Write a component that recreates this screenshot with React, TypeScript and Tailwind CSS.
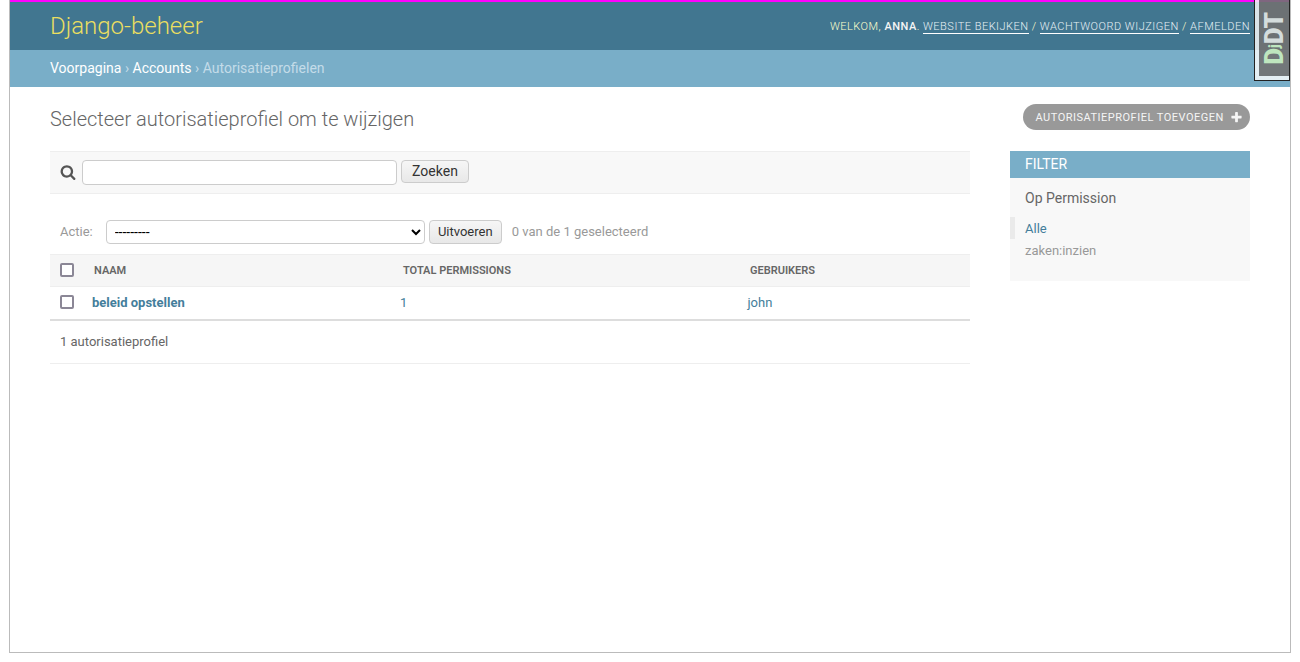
const userLinks = ["Website bekijken", "Wachtwoord wijzigen", "Afmelden"];

function Header() {
  return (
    <div className="flex h-[48px] items-center justify-between bg-[#417690] px-10">
      <div className="text-[24px] font-light text-[#ebdf60]">Django-beheer</div>
      <div className="pt-[2px] text-[11px] font-light tracking-[0.5px] uppercase text-[#ffffcc]">
        <span>Welkom, </span>
        <strong className="font-medium text-[#f5f5f5]">Anna</strong>
        <span>. </span>
        {userLinks.map((link, i) => (
          <span key={link}>
            {i > 0 && " / "}
            <a className="border-b border-white text-[#e6f0f5]">{link}</a>
          </span>
        ))}
      </div>
    </div>
  );
}

function Breadcrumbs() {
  return (
    <div className="flex h-[37px] items-center bg-[#79aec8] px-10 text-[14px] text-[#c4dce8]">
      <a className="text-white">Voorpagina</a>
      <span className="whitespace-pre"> › </span>
      <a className="text-white">Accounts</a>
      <span className="whitespace-pre"> › Autorisatieprofielen</span>
    </div>
  );
}

function Toolbar() {
  return (
    <div className="flex h-[43px] items-center border-y border-[#eeeeee] bg-[#f8f8f8] px-[10px]">
      <svg viewBox="0 0 1792 1792" className="mb-[1px] size-[16px] shrink-0 text-[#555555]" fill="currentColor">
        <path d="M1216 832q0-185-131.5-316.5t-316.5-131.5-316.5 131.5-131.5 316.5 131.5 316.5 316.5 131.5 316.5-131.5 131.5-316.5zm512 832q0 52-38 90t-90 38q-54 0-90-38l-343-342q-179 124-399 124-143 0-273.5-55.5t-225-150-150-225-55.5-273.5 55.5-273.5 150-225 225-150 273.5-55.5 273.5 55.5 225 150 150 225 55.5 273.5q0 220-124 399l343 343q37 37 37 90z" />
      </svg>
      <input className="ml-[6px] h-[25px] w-[315px] rounded-[4px] border border-[#cccccc] bg-white" />
      <button className="mb-[2px] ml-[4px] h-[23px] w-[68px] rounded-[4px] border border-[#cccccc] bg-linear-to-b from-[#f6f6f6] to-[#e8e8e8] text-[14px] text-[#333333]">
        Zoeken
      </button>
    </div>
  );
}

function Actions() {
  return (
    <div className="mt-[26px] flex h-[24px] items-center px-[10px] text-[13px] text-[#999999]">
      <span>Actie:</span>
      <select className="ml-[13px] h-[24px] w-[319px] rounded-[4px] border border-[#cccccc] bg-white px-[4px] text-[14px] text-black">
        <option>---------</option>
      </select>
      <button className="ml-[4px] h-[24px] w-[73px] rounded-[4px] border border-[#cccccc] bg-linear-to-b from-[#f6f6f6] to-[#e8e8e8] text-[13px] text-[#333333]">
        Uitvoeren
      </button>
      <span className="ml-[10px]">0 van de 1 geselecteerd</span>
    </div>
  );
}

function Checkbox() {
  return (
    <input
      type="checkbox"
      className="mb-[2px] ml-[10px] size-[14px] appearance-none rounded-[2px] border-2 border-[#8b8796] bg-white"
    />
  );
}

function ResultTable() {
  return (
    <div className="mt-[10px]">
      <div className="flex h-[33px] items-center border-y border-[#eeeeee] bg-[#f6f6f6] text-[11px] font-semibold uppercase text-[#666666]">
        <Checkbox />
        <span className="ml-[20px] w-[309px] pt-[2px]">Naam</span>
        <span className="w-[347px] pt-[2px]">Total permissions</span>
        <span className="pt-[2px]">Gebruikers</span>
      </div>
      <div className="flex h-[34px] items-center border-b-2 border-[#dddddd] text-[13px] text-[#447e9b]">
        <Checkbox />
        <a className="ml-[18px] w-[309px] font-bold">beleid opstellen</a>
        <a className="w-[346px] -translate-x-[1px]">1</a>
        <a className="ml-[0.5px]">john</a>
      </div>
      <div className="flex h-[43px] items-center border-b border-[#eeeeee] px-[10px] text-[13px] text-[#666666]">
        1 autorisatieprofiel
      </div>
    </div>
  );
}

function FilterPanel() {
  return (
    <div className="h-[130px] w-[240px] bg-[#f8f8f8]">
      <div className="flex h-[27px] items-center bg-[#79aec8] px-[15px] text-[14px] uppercase text-white">Filter</div>
      <div className="mt-[11px] px-[15px] text-[14px] leading-[18px] text-[#666666]">Op Permission</div>
      <div className="mt-[10px] flex h-[22px] items-center border-l-[5px] border-[#eaeaea] pt-[2px] pl-[10px] text-[13px] text-[#447e9b]">
        Alle
      </div>
      <div className="flex h-[22px] items-center pt-[2px] pl-[15px] text-[13px] text-[#999999]">zaken:inzien</div>
    </div>
  );
}

function DebugHandle() {
  return (
    <div className="absolute top-0 right-[10px] flex h-[81px] w-[36px] justify-center border-x border-b border-[#222222] bg-[#ffffffcc]">
      <div className="mb-[4px] ml-[4px] flex w-full items-center justify-center bg-[#00000080]">
        <div className="rotate-180 text-[26px] leading-none font-black text-[#d4dcdc] [writing-mode:vertical-rl]">
          <span className="text-[#bfe6bf]">
            D<span className="text-[14px] lowercase">j</span>
          </span>
          DT
        </div>
      </div>
    </div>
  );
}

export default function App() {
  return (
    <div className="relative h-[662px] w-[1300px] overflow-hidden bg-white px-[9px] [font-family:Roboto,sans-serif]">
      <div className="h-[653px] border-x border-b border-[#bbbbbb] bg-white">
        <div className="h-[2px] bg-[#ff00ff]" />
        <Header />
        <Breadcrumbs />
        <div className="flex gap-[40px] px-10 pt-[17px]">
          <div className="w-[920px]">
            <h1 className="mt-[3px] h-[27px] text-[20px] leading-[24px] font-light text-[#666666]">
              Selecteer autorisatieprofiel om te wijzigen
            </h1>
            <div className="mt-[17px]">
              <Toolbar />
              <Actions />
              <ResultTable />
            </div>
          </div>
          <div className="flex w-[240px] flex-col items-end">
            <a className="flex h-[26px] w-[227px] items-center rounded-[15px] bg-[#999999] pl-[12.5px] text-[11px] font-normal tracking-[0.5px] uppercase text-[#f5f5f5]">
              <span className="pt-[2px]">Autorisatieprofiel toevoegen</span>
              <svg viewBox="0 0 1792 1792" className="ml-[6px] size-[13px]" fill="currentColor">
                <path d="M1600 736v192q0 40-28 68t-68 28h-416v416q0 40-28 68t-68 28h-192q-40 0-68-28t-28-68v-416h-416q-40 0-68-28t-28-68v-192q0-40 28-68t68-28h416v-416q0-40 28-68t68-28h192q40 0 68 28t28 68v416h416q40 0 68 28t28 68z" />
              </svg>
            </a>
            <div className="mt-[21px]">
              <FilterPanel />
            </div>
          </div>
        </div>
      </div>
      <DebugHandle />
    </div>
  );
}
